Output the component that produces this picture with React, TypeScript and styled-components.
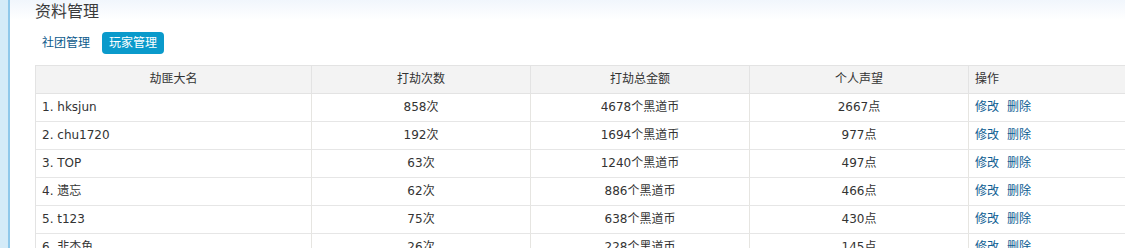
import styled, { createGlobalStyle } from "styled-components";

type Player = {
  name: string;
  robs: number;
  total: number;
  fame: number;
};

const players: Player[] = [
  { name: "hksjun", robs: 858, total: 4678, fame: 2667 },
  { name: "chu1720", robs: 192, total: 1694, fame: 977 },
  { name: "TOP", robs: 63, total: 1240, fame: 497 },
  { name: "遗忘", robs: 62, total: 886, fame: 466 },
  { name: "t123", robs: 75, total: 638, fame: 430 },
  { name: "非杰鱼", robs: 26, total: 228, fame: 145 },
];

const tabs = [
  { label: "社团管理", active: false },
  { label: "玩家管理", active: true },
];

const GlobalStyle = createGlobalStyle`
  html, body {
    margin: 0;
    padding: 0;
    overflow: hidden;
  }

  body {
    font-family: "DejaVu Sans", "Noto Sans CJK SC", sans-serif;
    font-size: 12px;
    color: #333;
    background: linear-gradient(#f1f6fc, #ffffff 20px) no-repeat;
    background-color: #fff;
  }
`;

const App = () => {
  return (
    <Page>
      <GlobalStyle />
      <SideStrip />
      <Main>
        <Title>资料管理</Title>
        <TabBar>
          {tabs.map(({ label, active }) => (
            <Tab key={label} $active={active}>
              {label}
            </Tab>
          ))}
        </TabBar>
        <Table>
          <thead>
            <tr>
              <HeadCell $width={276}>劫匪大名</HeadCell>
              <HeadCell $width={219}>打劫次数</HeadCell>
              <HeadCell $width={219}>打劫总金额</HeadCell>
              <HeadCell $width={219}>个人声望</HeadCell>
              <HeadCell $width={166} $left>
                操作
              </HeadCell>
            </tr>
          </thead>
          <tbody>
            {players.map(({ name, robs, total, fame }, i) => (
              <tr key={name}>
                <Cell $left>
                  {i + 1}. {name}
                </Cell>
                <Cell>{robs}次</Cell>
                <Cell>{total}个黑道币</Cell>
                <Cell>{fame}点</Cell>
                <Cell $left>
                  <ActionLink href="#">修改</ActionLink>
                  <ActionLink href="#">删除</ActionLink>
                </Cell>
              </tr>
            ))}
          </tbody>
        </Table>
      </Main>
    </Page>
  );
};

const Page = styled.div`
  display: flex;
  min-height: 100vh;
`;

const SideStrip = styled.div`
  flex: 0 0 8px;
  background: #d4ebf8;
  border-right: 2px solid #8fc8ea;
`;

const Main = styled.div`
  flex: 1;
  padding-left: 25px;
  min-width: 0;
`;

const Title = styled.h2`
  margin: 0;
  font-size: 16px;
  line-height: 24px;
  font-weight: normal;
  color: #3a3a3a;
`;

const TabBar = styled.div`
  display: flex;
  gap: 5px;
  margin-top: 8px;
`;

const Tab = styled.a<{ $active: boolean }>`
  display: block;
  height: 22px;
  line-height: 22px;
  padding: 0 7px;
  border-radius: 4px;
  font-size: 12px;
  cursor: pointer;
  color: ${({ $active }) => ($active ? "#fff" : "#0c5a8c")};
  background: ${({ $active }) => ($active ? "#0a9acb" : "transparent")};
`;

const Table = styled.table`
  margin-top: 11px;
  width: 1100px;
  table-layout: fixed;
  border-collapse: separate;
  border-spacing: 0;
  border-top: 1px solid #e3e3e3;
  border-left: 1px solid #e3e3e3;
`;

const HeadCell = styled.th<{ $width: number; $left?: boolean }>`
  box-sizing: border-box;
  width: ${({ $width }) => $width}px;
  padding: 0 6px;
  line-height: 27px;
  font-weight: normal;
  text-align: ${({ $left }) => ($left ? "left" : "center")};
  background: #f3f3f3;
  border-right: 1px solid #e3e3e3;
  border-bottom: 1px solid #e3e3e3;
  color: #333;
`;

const Cell = styled.td<{ $left?: boolean }>`
  box-sizing: border-box;
  padding: 0 6px;
  line-height: 27px;
  white-space: nowrap;
  text-align: ${({ $left }) => ($left ? "left" : "center")};
  border-right: 1px solid #e6e5e1;
  border-bottom: 1px solid #e6e6e6;
  color: #333;
`;

const ActionLink = styled.a`
  color: #0c5d92;
  text-decoration: none;
  margin-right: 8px;
`;

export default App;
